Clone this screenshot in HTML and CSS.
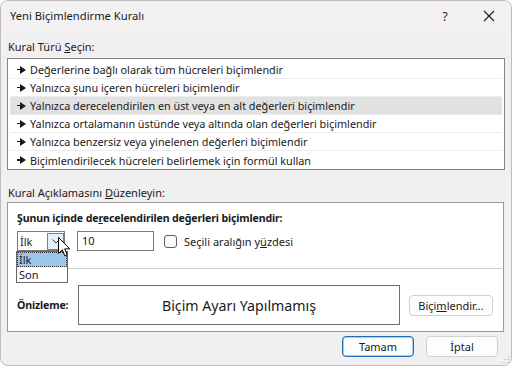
FILE: index.html
```html
<!DOCTYPE html>
<html lang="tr">
<head>
<meta charset="utf-8">
<title>Yeni Biçimlendirme Kuralı</title>
<link rel="stylesheet" href="styles.css">
</head>
<body>
<div class="window">
  <div class="titlebar">
    <span class="title">Yeni Biçimlendirme Kuralı</span>
    <span class="help">?</span>
    <span class="close"><svg width="12" height="12" viewBox="0 0 12 12"><path d="M1 1 L11 11 M11 1 L1 11" stroke="#1a1a1a" stroke-width="1.1" fill="none"/></svg></span>
  </div>
  <div class="content">
    <div class="label">Kural Türü <u>S</u>eçin:</div>
    <div class="rulelist">
      <div class="rule"><span class="arrow"></span>Değerlerine bağlı olarak tüm hücreleri biçimlendir</div>
      <div class="rule"><span class="arrow"></span>Yalnızca şunu içeren hücreleri biçimlendir</div>
      <div class="rule selected"><span class="arrow"></span>Yalnızca derecelendirilen en üst veya en alt değerleri biçimlendir</div>
      <div class="rule"><span class="arrow"></span>Yalnızca ortalamanın üstünde veya altında olan değerleri biçimlendir</div>
      <div class="rule"><span class="arrow"></span>Yalnızca benzersiz veya yinelenen değerleri biçimlendir</div>
      <div class="rule last"><span class="arrow"></span>Biçimlendirilecek hücreleri belirlemek için formül kullan</div>
    </div>
    <div class="label label2">Kural Açıklamasını <u>D</u>üzenleyin:</div>
    <div class="groupbox">
      <div class="heading">Şunun içinde de<u>r</u>ecelendirilen değerleri biçimlendir:</div>
      <div class="controls">
        <div class="combo">
          <span class="combo-text">İlk</span>
          <span class="combo-btn"><svg width="8" height="5" viewBox="0 0 8 5"><path d="M0.5 0.5 L4 4 L7.5 0.5" stroke="#333" stroke-width="1" fill="none"/></svg></span>
          <div class="dropdown">
            <div class="opt active">İlk</div>
            <div class="opt">Son</div>
          </div>
          <svg class="cursor" width="13" height="21" viewBox="0 0 13 21"><path d="M0.5 0.5 L0.5 16.5 L4.3 12.8 L6.8 18.8 L9.2 17.8 L6.7 11.9 L11.8 11.9 Z" fill="#fff" stroke="#000" stroke-width="1" stroke-linejoin="round"/></svg>
        </div>
        <div class="textbox">10</div>
        <label class="check"><span class="box"></span>Seçili aralığın y<u>ü</u>zdesi</label>
      </div>
      <div class="separator"></div>
      <div class="preview-row">
        <div class="preview-label">Önizleme:</div>
        <div class="preview">Biçim Ayarı Yapılmamış</div>
        <button class="btn fmt">Biçi<u>m</u>lendir...</button>
      </div>
    </div>
    <div class="buttons">
      <button class="btn default">Tamam</button>
      <button class="btn">İptal</button>
    </div>
  </div>
  <div class="grip"></div>
</div>
</body>
</html>
```
FILE: styles.css
```css
* { box-sizing: border-box; }
html, body { margin: 0; padding: 0; background: #ffffff; }
body {
  font-family: "Noto Sans", "Open Sans", sans-serif;
  font-size: 11px;
  color: #1a1a1a;
  width: 512px;
  height: 366px;
  overflow: hidden;
}
.window {
  position: relative;
  width: 512px;
  height: 366px;
  border: 1px solid #bdbdbd;
  border-radius: 8px;
  background: #f0f0f0;
  overflow: hidden;
}
.titlebar {
  height: 30px;
  background: #f4f1f3;
  display: flex;
  align-items: center;
  padding-left: 9px;
}
.title { flex: 1; line-height: 16px; font-size: 11.2px; }
.help { width: 14px; text-align: center; margin-right: 31px; font-size: 12px; }
.close { width: 12px; height: 12px; margin-right: 16px; display: flex; }
.content { padding: 8px 6px 0 6px; }
.label { line-height: 16px; padding-left: 1px; margin-bottom: 3px; }
.label2 { margin-top: 15px; margin-bottom: 1px; }
.rulelist {
  border: 1px solid #848484;
  background: #fff;
  height: 112px;
  padding: 2px 2px 0 2px;
}
.rule {
  height: 18px;
  line-height: 17px;
  border-bottom: 1px solid #ececec;
  padding-left: 7px;
  display: flex;
  align-items: center;
  white-space: nowrap;
  font-size: 10.8px;
}
.rule.last { border-bottom: none; }
.rule.selected { background: #e1e1e1; }
.arrow {
  position: relative;
  width: 9px;
  height: 8px;
  margin-right: 4px;
  flex: none;
}
.arrow::before {
  content: "";
  position: absolute;
  left: 0; top: 3px;
  width: 4px; height: 1.5px;
  background: #1a1a1a;
}
.arrow::after {
  content: "";
  position: absolute;
  left: 3px; top: 0;
  border-left: 6px solid #1a1a1a;
  border-top: 4px solid transparent;
  border-bottom: 4px solid transparent;
}
.groupbox {
  background: #fff;
  border: 1px solid #9a9a9a;
  margin-right: 1px;
  height: 130px;
  padding: 7px 0 0 9px;
}
.heading { font-weight: bold; line-height: 16px; font-size: 10.6px; letter-spacing: -0.15px; }
.controls {
  display: flex;
  align-items: center;
  margin-top: 5px;
  height: 20px;
}
.combo {
  position: relative;
  width: 48px;
  height: 20px;
  border: 1px solid #7a7a7a;
  display: flex;
  align-items: center;
  padding-left: 2px;
}
.combo-text { flex: 1; }
.combo-btn {
  width: 17px;
  height: 17px;
  border: 1px solid #3a8fd6;
  background: #e5f1fb;
  display: flex;
  align-items: center;
  justify-content: center;
}
.dropdown {
  position: absolute;
  left: -2px;
  top: 19px;
  width: 52px;
  border: 1px solid #666;
  background: #fff;
  z-index: 2;
}
.opt { height: 15px; line-height: 15px; padding-left: 2px; font-size: 11px; }
.opt.active { background: #9dc6ee; outline: 1px dotted #333; outline-offset: -1px; }
.cursor { position: absolute; left: 40px; top: 5px; z-index: 3; }
.textbox {
  width: 77px;
  height: 20px;
  border: 1px solid #7a7a7a;
  margin-left: 12px;
  padding-left: 4px;
  line-height: 18px;
}
.check {
  display: flex;
  align-items: center;
  margin-left: 10px;
}
.box {
  width: 13px; height: 13px;
  border: 1px solid #5c5c5c;
  border-radius: 3px;
  margin-right: 7px;
  background: #fafafa;
}
.separator {
  height: 1px;
  background: #cfcfcf;
  margin: 17px 1px 0 -1px;
}
.preview-row {
  display: flex;
  align-items: center;
  margin-top: 16px;
}
.preview-label { font-weight: bold; width: 61px; font-size: 10.6px; letter-spacing: -0.15px; }
.preview {
  width: 322px;
  height: 40px;
  border: 1px solid #6e6e6e;
  font-size: 14.2px;
  display: flex;
  align-items: center;
  justify-content: center;
}
.btn {
  font-family: inherit;
  font-size: 11px;
  color: #1a1a1a;
  background: #fdfdfd;
  border: 1px solid #d0d0d0;
  border-radius: 4px;
  height: 21px;
  padding: 0;
}
.fmt { width: 84px; margin-left: 9px; }
.buttons {
  display: flex;
  justify-content: flex-end;
  gap: 12px;
  margin-top: 4px;
  padding-right: 7px;
}
.buttons .btn { width: 72px; }
.btn.default { border: 1px solid #1f6fbf; box-shadow: inset 0 0 0 0.5px #5a9ad6; }
.grip {
  position: absolute;
  right: 2px; bottom: 2px;
  width: 8px; height: 8px;
  background-image: radial-gradient(circle, #b0b0b0 0.8px, transparent 1px);
  background-size: 3px 3px;
  clip-path: polygon(100% 0, 100% 100%, 0 100%);
}
```
